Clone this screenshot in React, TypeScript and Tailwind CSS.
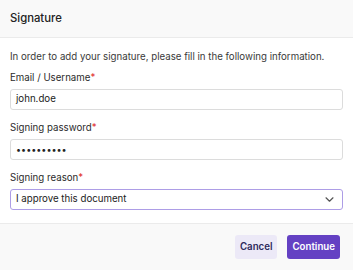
import React from 'react';

const Label = ({ text }: { text: string }) => (
  <p className="text-[9.7px] leading-[14px] text-[#2b2b2b]">
    {text}
    <span className="text-[#e02d2d]">*</span>
  </p>
);

const App = () => {
  return (
    <div className="flex h-[270px] w-[353px] flex-col bg-white font-['Inter',sans-serif]">
      <div className="flex h-[38px] items-center border-b border-[#ebebeb] bg-[#f9f9f9] px-[10px]">
        <h1 className="text-[11.3px] font-medium text-[#222]">Signature</h1>
      </div>
      <div className="flex flex-1 flex-col px-[10px] pt-[12px]">
        <p className="text-[9.7px] leading-[14px] text-[#3a3a3a]">
          In order to add your signature, please fill in the following information.
        </p>
        <div className="mt-[7px]">
          <Label text="Email / Username" />
          <div className="mt-[4px] flex h-[21px] items-center rounded-[3px] border border-[#dcdcdc] px-[5px] text-[9.7px] text-[#222]">
            john.doe
          </div>
        </div>
        <div className="mt-[11px]">
          <Label text="Signing password" />
          <div className="mt-[4px] flex h-[21px] items-center rounded-[3px] border border-[#dcdcdc] px-[5px] text-[9px] text-[#222]">
            ••••••••••
          </div>
        </div>
        <div className="mt-[11px]">
          <Label text="Signing reason" />
          <div className="mt-[4px] flex h-[21px] items-center justify-between rounded-[3px] border border-[#ad9de6] px-[5px] text-[9.7px] text-[#222]">
            <span>I approve this document</span>
            <svg width="9" height="5" viewBox="0 0 9 5" fill="none" className="mr-[3px]">
              <path d="M1 0.8l3.5 3.4 3.5-3.4" stroke="#555" strokeWidth="1.2" strokeLinecap="round" strokeLinejoin="round" />
            </svg>
          </div>
        </div>
      </div>
      <div className="flex h-[47px] items-center justify-end gap-[10px] border-t border-[#ebebeb] bg-[#f9f9f9] px-[13px]">
        <button className="h-[24px] rounded-[3px] bg-[#ece9f7] px-[5px] text-[9.7px] font-semibold text-[#2e2a5c]">
          Cancel
        </button>
        <button className="h-[24px] rounded-[3px] bg-[#6441c3] px-[5px] text-[9.7px] font-semibold text-white">
          Continue
        </button>
      </div>
    </div>
  );
};

export default App;
